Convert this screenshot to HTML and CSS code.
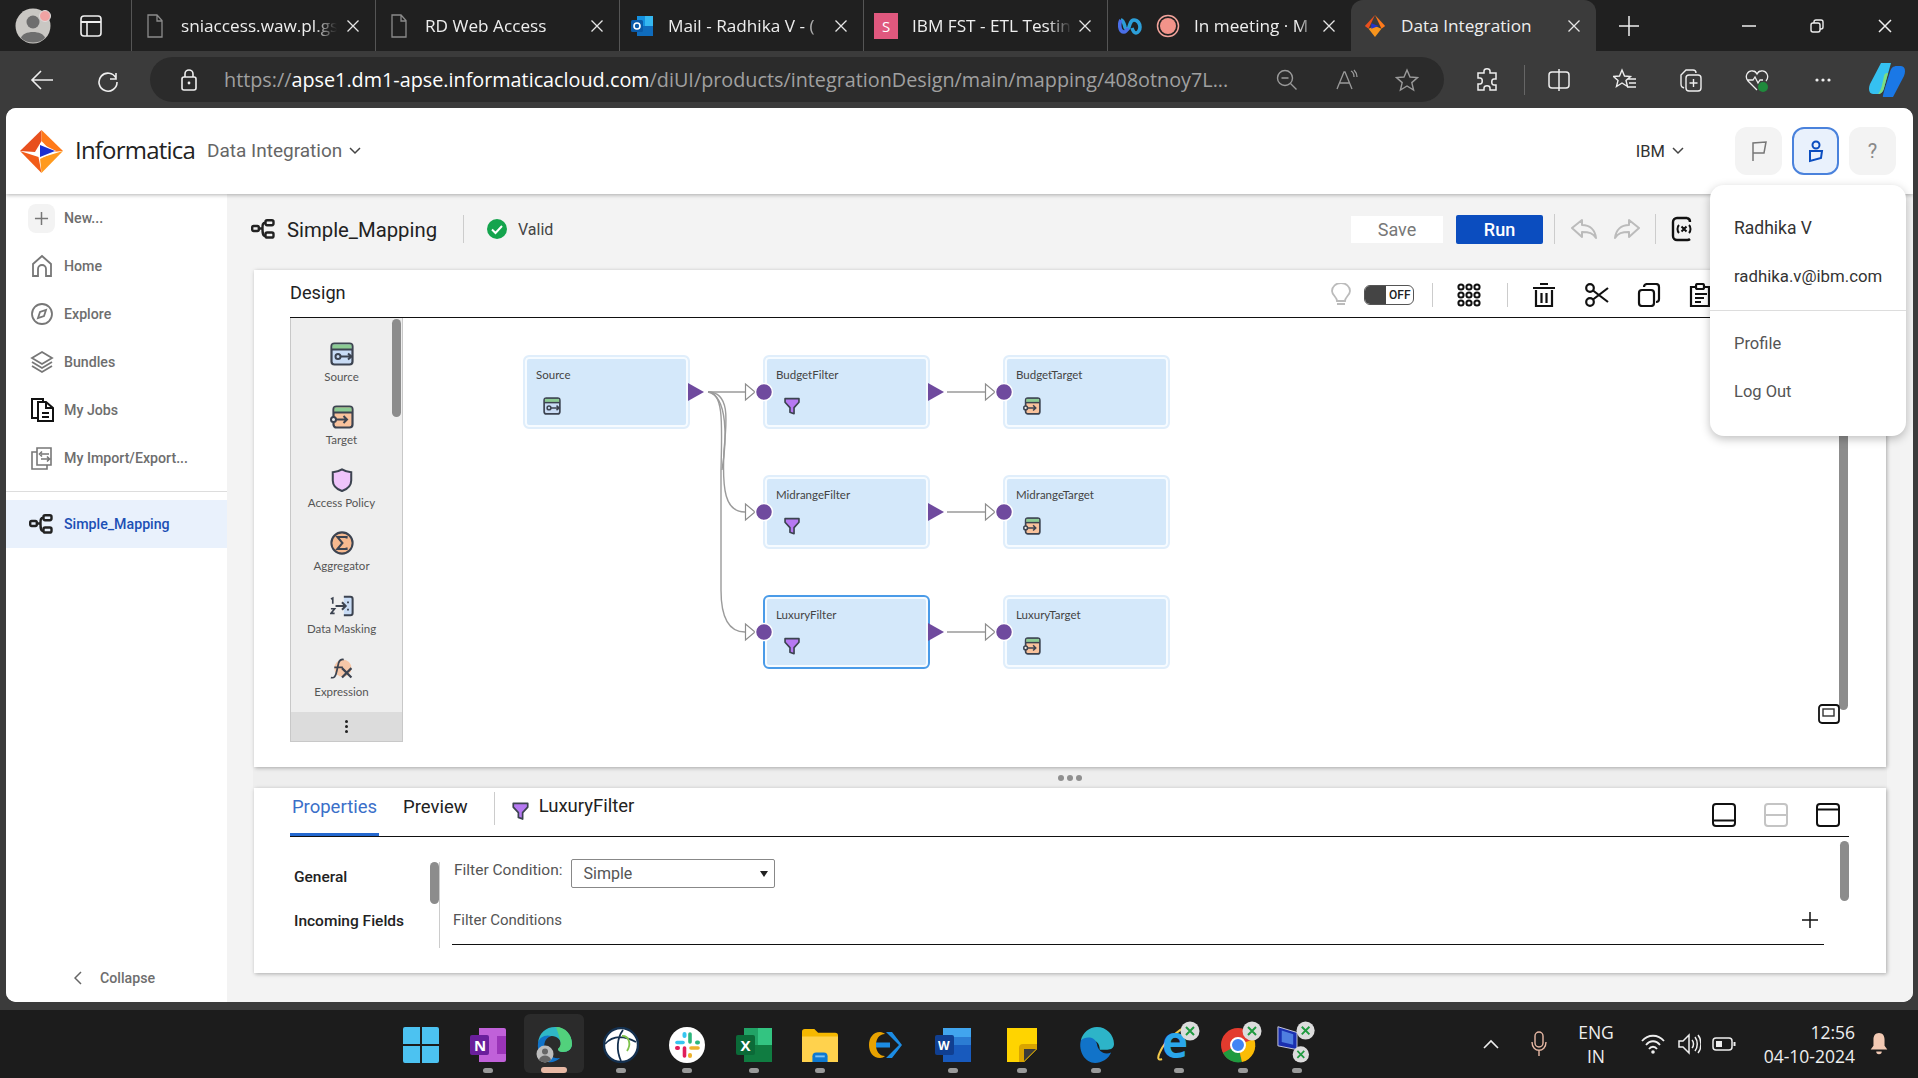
FILE: index.html
```html
<!DOCTYPE html>
<html lang="en">
<head>
<meta charset="utf-8">
<title>Data Integration</title>
<link rel="stylesheet" href="styles.css">
</head>
<body>
<svg class="sprite" xmlns="http://www.w3.org/2000/svg">
  <symbol id="mapping" viewBox="0 0 24 20"><g fill="none" stroke="currentColor" stroke-width="2.4"><rect x="1.2" y="7" width="6.6" height="5" rx="1.4"/><rect x="14.5" y="1.2" width="8" height="5" rx="1.6"/><rect x="14.5" y="13.5" width="8" height="5" rx="1.6"/><path d="M8 9.5h3M14.5 3.8c-3 0-3 2-3 5.7s0 7.5 3 7.5"/></g></symbol>
  <symbol id="page" viewBox="0 0 18 24"><path d="M2 1h9l5 5.500V23H2z M11 1v6h5" fill="none" stroke="#8b8b8b" stroke-width="1.300"/></symbol>
  <symbol id="x" viewBox="0 0 14 14"><path d="M1.500 1.500l11 11M12.500 1.500l-11 11" stroke="#e6e6e6" stroke-width="1.300" fill="none"/></symbol>
  <symbol id="src" viewBox="0 0 24 24"><rect x="1.500" y="1.500" width="21" height="21" rx="3" fill="#c9dcf5" stroke="#3c4350" stroke-width="2.200"/><path d="M2.500 2.500h19v5h-19z" fill="#8ccb93"/><path d="M1.500 7.500h21" stroke="#3c4350" stroke-width="2"/><circle cx="8" cy="14.500" r="2.500" fill="none" stroke="#3c4350" stroke-width="2"/><path d="M10.500 14.500h11M18 11.500l3.500 3-3.500 3" fill="none" stroke="#3c4350" stroke-width="2"/></symbol>
  <symbol id="tgt" viewBox="0 0 24 24"><rect x="3.500" y="1.500" width="19" height="21" rx="3" fill="#f9c29c" stroke="#3c4350" stroke-width="2.200"/><path d="M4.500 2.500h17v5h-17z" fill="#8ccb93"/><path d="M3.500 7.500h19" stroke="#3c4350" stroke-width="2"/><circle cx="3.500" cy="14.500" r="2.500" fill="#eee" stroke="#3c4350" stroke-width="2"/><path d="M6 14.500h11M13.500 11l3.500 3.500-3.500 3.500" fill="none" stroke="#3c4350" stroke-width="2"/></symbol>
  <symbol id="funnel" viewBox="0 0 20 22"><path d="M1.500 2h17v4.500L12.500 13v7.500l-5-2V13L1.500 6.500z" fill="#b679f2" stroke="#3c4350" stroke-width="2" stroke-linejoin="round"/></symbol>
  <symbol id="shield" viewBox="0 0 24 26"><path d="M12 1.500c3 2 6 2.800 10 3v9c0 5.500-4.500 9.500-10 11.500C6.500 23 2 19 2 13.500v-9c4-.2 7-1 10-3z" fill="#efc4fa" stroke="#3c4350" stroke-width="2.200"/></symbol>
  <symbol id="sigma" viewBox="0 0 26 26"><circle cx="13" cy="13" r="11.500" fill="#f6b98f" stroke="#3c4350" stroke-width="2.200"/><path d="M18 8V6.500H8l5.500 6.500L8 19.500h10V18" fill="none" stroke="#3c4350" stroke-width="2.200"/></symbol>
  <symbol id="mask" viewBox="0 0 26 24"><path d="M15 2h7a2.500 2.500 0 0 1 2.500 2.500v15A2.500 2.500 0 0 1 22 22h-7" fill="#c9dcf5" stroke="#3c4350" stroke-width="2.200"/><path d="M6 12h11M13 8l4 4-4 4" fill="none" stroke="#3c4350" stroke-width="2.200"/><path d="M19.500 7v2M19.500 15v2" stroke="#3c4350" stroke-width="2"/><path d="M1 4.500l2-1v6M1 15h4l-4 5h4" fill="none" stroke="#3c4350" stroke-width="1.800"/></symbol>
  <symbol id="fx" viewBox="0 0 28 26"><circle cx="15" cy="12" r="10" fill="#f6c7a8"/><path d="M1 23c4 1 5.500-1 7-8l2-9c1-3 3-4.500 6-4M5 11h10" fill="none" stroke="#3c4350" stroke-width="2"/><path d="M14 12l11 11M25 12L14 23" stroke="#3c4350" stroke-width="2.600"/></symbol>
  <symbol id="search" viewBox="0 0 24 24"><circle cx="10" cy="10" r="7.500" fill="none" stroke="#9a9a9a" stroke-width="1.400"/><path d="M6.500 10h7M15.500 15.500l6 6" stroke="#9a9a9a" stroke-width="1.400"/></symbol>
  <symbol id="rd" viewBox="0 0 20 20"><circle cx="10" cy="10" r="9.500" fill="#dcdcdc"/><path d="M6 6l4 4-4 4M14 6l-4 4 4 4" fill="none" stroke="#1f9a3f" stroke-width="2"/></symbol>
</svg>

<header class="tabstrip">
  <div class="profile">
    <svg class="avatar" viewBox="0 0 44 36"><circle cx="18" cy="18" r="17.500" fill="#c9c7c3"/><circle cx="18" cy="14" r="6.500" fill="#6e6e6e"/><path d="M6 30c2-8 22-8 24 0-6 6-18 6-24 0z" fill="#6e6e6e"/><circle cx="30" cy="8" r="5.500" fill="#f0a3a3" stroke="#ddd"/></svg>
    <svg class="vtabs" viewBox="0 0 22 22"><rect x="1" y="1" width="20" height="20" rx="3" fill="none" stroke="#eee" stroke-width="1.600"/><path d="M1 7h20" stroke="#eee" stroke-width="2"/><path d="M7 7v14" stroke="#eee" stroke-width="1.600"/></svg>
  </div>
  <div class="tab"><svg class="tab-ic"><use href="#page"/></svg><span class="tab-t">sniaccess.waw.pl.gs</span><svg class="tab-x"><use href="#x"/></svg></div>
  <div class="tab"><svg class="tab-ic"><use href="#page"/></svg><span class="tab-t">RD Web Access</span><svg class="tab-x"><use href="#x"/></svg></div>
  <div class="tab tab-c"><svg class="tab-ic tab-ic-w" viewBox="0 0 24 24"><path d="M7 2h16v20H7z" fill="#1490df"/><path d="M7 12h16v10H7z" fill="#0f6cbd"/><path d="M15 2h8v10h-8z" fill="#35b8f1"/><rect x="1" y="6" width="12" height="12" rx="1.500" fill="#0a5aa8"/><circle cx="7" cy="12" r="3" fill="none" stroke="#fff" stroke-width="1.600"/></svg><span class="tab-t">Mail - Radhika V - (</span><svg class="tab-x"><use href="#x"/></svg></div>
  <div class="tab tab-c"><span class="tab-s">S</span><span class="tab-t">IBM FST - ETL Testin</span><svg class="tab-x"><use href="#x"/></svg></div>
  <div class="tab tab-c"><svg class="tab-ic tab-ic-w" viewBox="0 0 24 24"><path d="M3 6c2 0 3 3 4 7 1 3 3 3 4 0l1-3c1-3 2-4 4-4 4 0 6 4 6 7s-2 6-4 6-3-2-4-5" fill="none" stroke="#2c9fd9" stroke-width="3.600"/><path d="M3 6C1 9 1 18 6 18c2 0 3-2 4-4" fill="none" stroke="#4a6fe8" stroke-width="3.600"/></svg><svg class="tab-ic tab-ic-w" viewBox="0 0 24 24"><circle cx="12" cy="12" r="10.500" fill="none" stroke="#f2a39b" stroke-width="1.500"/><circle cx="12" cy="12" r="8" fill="#f2938a"/></svg><span class="tab-t">In meeting · M</span><svg class="tab-x"><use href="#x"/></svg></div>
  <div class="tab tab-c tab-on"><svg class="tab-ic tab-ic-w" viewBox="0 0 24 26"><path d="M12 1L1 13l4 3z" fill="#e8501e"/><path d="M12 1l11 12-4 3z" fill="#ff7a1a"/><path d="M5 16l7 9 7-9-7-3z" fill="#f7941d"/><path d="M8 10l8 3-8 3z" fill="#2233cc"/></svg><span class="tab-t">Data Integration</span><svg class="tab-x"><use href="#x"/></svg></div>
  <svg class="newtab" viewBox="0 0 22 22"><path d="M11 1v20M1 11h20" stroke="#eee" stroke-width="1.500"/></svg>
  <div class="winbtns">
    <svg viewBox="0 0 16 16"><path d="M1 8h14" stroke="#eee" stroke-width="1.500"/></svg>
    <svg viewBox="0 0 16 16"><rect x="2" y="5" width="9" height="9" rx="2" fill="none" stroke="#eee" stroke-width="1.400"/><path d="M5 5V4a2 2 0 0 1 2-2h5a2 2 0 0 1 2 2v5a2 2 0 0 1-2 2h-1" fill="none" stroke="#eee" stroke-width="1.400"/></svg>
    <svg viewBox="0 0 16 16"><path d="M2 2l12 12M14 2L2 14" stroke="#eee" stroke-width="1.500"/></svg>
  </div>
</header>

<nav class="addrbar">
  <svg class="bi" viewBox="0 0 24 24"><path d="M23 12H2M11 3l-9 9 9 9" fill="none" stroke="#eee" stroke-width="1.600"/></svg>
  <svg class="bi" viewBox="0 0 24 24"><path d="M20 5v6h-6M20 10a9 9 0 1 0 1 4" fill="none" stroke="#eee" stroke-width="1.600"/></svg>
  <div class="field">
    <svg class="bi" viewBox="0 0 24 24"><rect x="5" y="9" width="14" height="13" rx="2" fill="none" stroke="#eee" stroke-width="1.600"/><path d="M8 9V6a4 4 0 0 1 8 0v3" fill="none" stroke="#eee" stroke-width="1.600"/><circle cx="12" cy="15" r="1.400" fill="#eee"/></svg>
    <div class="url">https://<b>apse1.dm1-apse.informaticacloud.com</b>/diUI/products/integrationDesign/main/mapping/408otnoy7L...</div>
    <div class="field-ics">
      <svg class="bi"><use href="#search"/></svg>
      <svg class="bi" viewBox="0 0 24 24"><path d="M2 21L9 4h1l7 17M5 15h10M16 3c2 1 3 3 3 6M19 2c2 2 3 4 3 7" fill="none" stroke="#9a9a9a" stroke-width="1.300"/></svg>
      <svg class="bi" viewBox="0 0 24 24"><path d="M12 2l3 7 7.500.6-5.700 5 1.800 7.400L12 18l-6.600 4 1.800-7.400-5.700-5L9 9z" fill="none" stroke="#9a9a9a" stroke-width="1.400"/></svg>
    </div>
  </div>
  <div class="ext">
    <svg class="bi" viewBox="0 0 24 24"><path d="M9 3c0-3 6-3 6 0v2h6v6h-2c-3 0-3 6 0 6h2v5h-6v-2c0-3-6-3-6 0v2H3v-6h2c3 0 3-6 0-6H3V5h6z" fill="none" stroke="#eee" stroke-width="1.500"/></svg>
    <i class="ext-div"></i>
    <svg class="bi" viewBox="0 0 24 24"><rect x="2" y="4" width="20" height="16" rx="3" fill="none" stroke="#eee" stroke-width="1.500"/><path d="M12 1v22" stroke="#eee" stroke-width="1.500"/></svg>
    <svg class="bi" viewBox="0 0 24 24"><path d="M9 2l2.500 6 6 .5-4.500 4 1.500 6L9 15l-5.500 3.500 1.500-6-4.500-4 6-.5zM15 11h8M16 15h7M14 19h9" fill="none" stroke="#eee" stroke-width="1.400"/></svg>
    <svg class="bi" viewBox="0 0 24 24"><rect x="7" y="7" width="15" height="16" rx="3" fill="none" stroke="#eee" stroke-width="1.400"/><path d="M5 20l-2-1c-1-1-1-2-1-3V7l5-5h7c2 0 3 1 3 3M14.500 11v8M10.500 15h8" fill="none" stroke="#eee" stroke-width="1.400"/></svg>
    <svg class="bi" viewBox="0 0 24 24"><path d="M12 22L3 13C-1 8 3 2 8 3c2 0 3 1 4 3 1-2 2-3 4-3 5-1 9 5 5 10M2 12h6l2-3 3 6 2-3h3" fill="none" stroke="#eee" stroke-width="1.300"/><circle cx="18" cy="19" r="5" fill="#1f8a3c"/></svg>
    <svg class="bi" viewBox="0 0 24 24"><circle cx="6" cy="12" r="1.600" fill="#eee"/><circle cx="12" cy="12" r="1.600" fill="#eee"/><circle cx="18" cy="12" r="1.600" fill="#eee"/></svg>
    <svg class="copilot" viewBox="0 0 36 36"><path d="M12 1h10l-7 25c-1 4-3 6-7 6H4C0 32-1 27 1 22z" fill="#35c1f1"/><path d="M15 14c0-2 2-3 3-3h1L15 26c-1 4-3 6-6 6 3-3 4-8 6-18z" fill="#7de07f"/><path d="M24 35H14c-1 0 7-25 7-25 1-4 3-6 7-6h4c4 0 5 5 3 10z" fill="#1a78e6"/></svg>
  </div>
</nav>

<main class="app">
  <div class="apphead">
    <svg class="logo" viewBox="0 0 43 43"><path d="M21.500 0L0 21l15 1 6.500-11z" fill="#e8501e"/><path d="M21.500 0L43 21l-11 1-10.500-11z" fill="#ff7a1a"/><path d="M0 21l21.500 22-3-16z" fill="#f25c19"/><path d="M21.500 43L43 21l-23 7z" fill="#ff9a1e"/><path d="M20 13l16 8-16 8z" fill="#fff"/><path d="M20 15l15 6-15 6z" fill="#1c2fd0"/></svg>
    <span class="brand">Informatica</span>
    <span class="product">Data Integration</span>
    <svg class="chev" viewBox="0 0 12 8"><path d="M1 1l5 5 5-5" fill="none" stroke="#444" stroke-width="1.500"/></svg>
    <span class="org">IBM</span>
    <svg class="chev" viewBox="0 0 12 8"><path d="M1 1l5 5 5-5" fill="none" stroke="#444" stroke-width="1.500"/></svg>
    <div class="hbtns">
      <span class="hbtn"><svg viewBox="0 0 24 24"><path d="M6 22V4l13-1-2 11H6" fill="none" stroke="#777" stroke-width="1.500"/></svg></span>
      <span class="hbtn hbtn-on"><svg viewBox="0 0 24 24"><circle cx="12" cy="6" r="3.500" fill="none" stroke="#0b4dbf" stroke-width="2"/><path d="M6 12h12l-1 7-11 3z" fill="none" stroke="#0b4dbf" stroke-width="2"/></svg></span>
      <span class="hbtn hbtn-q">?</span>
    </div>
  </div>

  <div class="appbody">
    <aside class="side">
      <div class="row"><span class="plus"><svg viewBox="0 0 16 16"><path d="M8 1v14M1 8h14" stroke="#777" stroke-width="1.600"/></svg></span><span>New...</span></div>
      <div class="row"><svg class="ri" viewBox="0 0 24 24"><path d="M3 22V10l9-8 9 8v12h-5v-7a4 4 0 0 0-8 0v7z" fill="none" stroke="#777" stroke-width="1.800"/></svg><span>Home</span></div>
      <div class="row"><svg class="ri" viewBox="0 0 24 24"><circle cx="12" cy="12" r="10" fill="none" stroke="#777" stroke-width="1.800"/><path d="M16 8l-2 6-6 2 2-6z" fill="none" stroke="#777" stroke-width="1.800"/></svg><span>Explore</span></div>
      <div class="row"><svg class="ri" viewBox="0 0 24 24"><path d="M12 2l10 6-10 6L2 8z" fill="#fff" stroke="#777" stroke-width="1.800"/><path d="M2 12l10 6 10-6M2 16l10 6 10-6" fill="none" stroke="#777" stroke-width="1.800"/></svg><span>Bundles</span></div>
      <div class="row"><svg class="ri" viewBox="0 0 24 24"><path d="M8 4h8l7 6v13H8z M16 4v6h7M12 15h7M12 19h7" fill="#fff" stroke="#111" stroke-width="2"/><path d="M8 20H2V1h11v3" fill="none" stroke="#111" stroke-width="2"/></svg><span>My Jobs</span></div>
      <div class="row"><svg class="ri" viewBox="0 0 24 24"><path d="M7 2h14v17H7z M11 8h8M11 13h8M12 5.500L9.500 8l2.500 2.500M17 10.500l2.500 2.500-2.500 2.500" fill="#fff" stroke="#777" stroke-width="1.600"/><path d="M7 6H2v17h15v-4" fill="none" stroke="#777" stroke-width="1.600"/></svg><span>My Import/Export...</span></div>
      <hr class="sep">
      <div class="row row-on"><svg class="ri ri-m"><use href="#mapping"/></svg><span>Simple_Mapping</span></div>
      <div class="row collapse"><svg class="back" viewBox="0 0 8 14"><path d="M7 1L1 7l6 6" fill="none" stroke="#666" stroke-width="1.500"/></svg><span>Collapse</span></div>
    </aside>

    <section class="main">
      <div class="toolbar">
        <svg class="map-ic"><use href="#mapping"/></svg>
        <span class="title">Simple_Mapping</span>
        <i class="vr vr-t"></i>
        <svg class="ok" viewBox="0 0 20 20"><circle cx="10" cy="10" r="10" fill="#14a44d"/><path d="M5 10.500l3.500 3.500L15 7" fill="none" stroke="#fff" stroke-width="2"/></svg>
        <span class="valid">Valid</span>
        <button class="save">Save</button>
        <button class="run">Run</button>
        <i class="vr vr-a"></i>
        <svg class="ur" viewBox="0 0 26 22"><path d="M1 10L11 2v5c8 0 13 5 14 13-3-5-7-6-14-6v5z" fill="none" stroke="#bbb" stroke-width="2" stroke-linejoin="round"/></svg>
        <svg class="ur ur-r" viewBox="0 0 26 22"><path d="M25 10L15 2v5C7 7 2 12 1 20c3-5 7-6 14-6v5z" fill="none" stroke="#bbb" stroke-width="2" stroke-linejoin="round"/></svg>
        <i class="vr vr-b"></i>
        <svg class="xv" viewBox="0 0 24 26"><path d="M16 2H6a4 4 0 0 0-4 4v14a4 4 0 0 0 4 4h10a4 4 0 0 0 3-1M19 6a4 4 0 0 0-3-4" fill="none" stroke="#111" stroke-width="2.400"/><path d="M8 9c-2 2-2 6 0 8M18 9c2 2 2 6 0 8M10.500 10.500l5 5M15.500 10.500l-5 5" fill="none" stroke="#111" stroke-width="2"/></svg>
      </div>

      <div class="panel design">
        <div class="dhead">
          <span class="dtitle">Design</span>
          <div class="dtools">
            <svg class="bulb" viewBox="0 0 20 24"><path d="M6 18c0-4-5-6-5-10a9 8 0 0 1 18 0c0 4-5 6-5 10zM6 21h8" fill="none" stroke="#bbb" stroke-width="1.800"/></svg>
            <span class="toggle"><i class="toggle-k"></i><span>OFF</span></span>
            <i class="vr vr-d"></i>
            <svg class="ti" viewBox="0 0 24 24"><g fill="none" stroke="#111" stroke-width="2"><circle cx="4" cy="4" r="2.600"/><circle cx="12" cy="4" r="2.600"/><circle cx="20" cy="4" r="2.600"/><circle cx="4" cy="12" r="2.600"/><circle cx="12" cy="12" r="2.600"/><circle cx="20" cy="12" r="2.600"/><circle cx="4" cy="20" r="2.600"/><circle cx="12" cy="20" r="2.600"/><circle cx="20" cy="20" r="2.600"/></g></svg>
            <i class="vr vr-d"></i>
            <svg class="ti ti-trash" viewBox="0 0 24 24"><path d="M4 7v16h16V7M1 5h22M8 1h8M9.500 10v10M14.500 10v10" fill="none" stroke="#111" stroke-width="2.200"/></svg>
            <svg class="ti" viewBox="0 0 24 24"><circle cx="5" cy="5" r="3.800" fill="none" stroke="#111" stroke-width="2.200"/><circle cx="5" cy="19" r="3.800" fill="none" stroke="#111" stroke-width="2.200"/><path d="M8 7.500L23 19M8 16.500L23 5" stroke="#111" stroke-width="2.200"/></svg>
            <svg class="ti" viewBox="0 0 24 24"><rect x="2" y="7" width="15" height="16" rx="3" fill="none" stroke="#111" stroke-width="2.200"/><path d="M7 4a3 3 0 0 1 3-3h9a3 3 0 0 1 3 3v12a3 3 0 0 1-3 3" fill="none" stroke="#111" stroke-width="2.200"/></svg>
            <svg class="ti" viewBox="0 0 24 24"><path d="M7 4H2v19h18V4h-5M6 11h12M6 15h9M6 19h6" fill="none" stroke="#111" stroke-width="2.200"/><rect x="7" y="1" width="8" height="5" rx="1.500" fill="none" stroke="#111" stroke-width="2.200"/></svg>
          </div>
        </div>
        <div class="dbody">
          <div class="palette">
            <div class="pal-list">
              <div class="pal"><svg><use href="#src"/></svg><span>Source</span></div>
              <div class="pal"><svg><use href="#tgt"/></svg><span>Target</span></div>
              <div class="pal"><svg><use href="#shield"/></svg><span>Access Policy</span></div>
              <div class="pal"><svg><use href="#sigma"/></svg><span>Aggregator</span></div>
              <div class="pal"><svg><use href="#mask"/></svg><span>Data Masking</span></div>
              <div class="pal"><svg><use href="#fx"/></svg><span>Expression</span></div>
            </div>
            <div class="pal-more"><i></i><i></i><i></i></div>
            <i class="pal-thumb"></i>
          </div>
          <div class="canvas">
            <div class="node c1 r1"><span>Source</span><svg><use href="#src"/></svg></div>
            <div class="node c2 r1"><span>BudgetFilter</span><svg><use href="#funnel"/></svg></div>
            <div class="node c3 r1"><span>BudgetTarget</span><svg><use href="#tgt"/></svg></div>
            <div class="node c2 r2"><span>MidrangeFilter</span><svg><use href="#funnel"/></svg></div>
            <div class="node c3 r2"><span>MidrangeTarget</span><svg><use href="#tgt"/></svg></div>
            <div class="node node-sel c2 r3"><span>LuxuryFilter</span><svg><use href="#funnel"/></svg></div>
            <div class="node c3 r3"><span>LuxuryTarget</span><svg><use href="#tgt"/></svg></div>
            <svg class="wires" viewBox="403 318 1446 424">
              <g fill="none" stroke="#9b9b9b" stroke-width="1.400">
                <path d="M708 392H745M947 392H985M947 512H985M947 632H985"/>
                <path d="M708 392C730 392 727 420 724 450C722 490 725 512 745 512"/>
                <path d="M708 392C724 392 722 425 721 470V590C721 620 730 632 745 632"/>
                <path d="M708 392C728 396 727 440 722 470"/>
              </g>
              <g fill="#fff" stroke="#8d8d8d" stroke-width="1.200">
                <path d="M745.500 384V400L755 392z"/><path d="M745.500 504V520L755 512z"/><path d="M745.500 624V640L755 632z"/>
                <path d="M985.500 384V400L995 392z"/><path d="M985.500 504V520L995 512z"/><path d="M985.500 624V640L995 632z"/>
              </g>
              <g fill="#6f4a9e">
                <path d="M688 383V401L704 392z"/><path d="M928 383V401L944 392z"/><path d="M928 503V521L944 512z"/><path d="M928 623V641L944 632z"/>
              </g>
              <g fill="#6f4a9e" stroke="#fff" stroke-width="1.500">
                <circle cx="764" cy="392" r="8.500"/><circle cx="764" cy="512" r="8.500"/><circle cx="764" cy="632" r="8.500"/>
                <circle cx="1004" cy="392" r="8.500"/><circle cx="1004" cy="512" r="8.500"/><circle cx="1004" cy="632" r="8.500"/>
              </g>
            </svg>
            <i class="canvas-thumb"></i>
            <svg class="mini" viewBox="0 0 22 20"><rect x="1" y="1" width="20" height="18" rx="3" fill="none" stroke="#111" stroke-width="1.800"/><rect x="5" y="5" width="11" height="7" fill="none" stroke="#333" stroke-width="1.400"/></svg>
          </div>
        </div>
      </div>

      <div class="grip"><i></i><i></i><i></i></div>

      <div class="panel props">
        <div class="ptabs">
          <span class="ptab ptab-on">Properties</span>
          <span class="ptab">Preview</span>
          <i class="vr vr-p"></i>
          <svg class="pf"><use href="#funnel"/></svg>
          <span class="pname">LuxuryFilter</span>
          <div class="pview">
            <svg viewBox="0 0 24 24"><rect x="1" y="1" width="22" height="22" rx="3" fill="none" stroke="#111" stroke-width="2"/><path d="M1 17.500h22" stroke="#111" stroke-width="2"/></svg>
            <svg viewBox="0 0 24 24"><rect x="1" y="1" width="22" height="22" rx="3" fill="none" stroke="#c4c4c4" stroke-width="2"/><path d="M1 12h22" stroke="#c4c4c4" stroke-width="2"/></svg>
            <svg viewBox="0 0 24 24"><rect x="1" y="1" width="22" height="22" rx="3" fill="none" stroke="#111" stroke-width="2"/><path d="M1 6.500h22" stroke="#111" stroke-width="2"/></svg>
          </div>
        </div>
        <div class="pbody">
          <div class="pnav"><div>General</div><div>Incoming Fields</div></div>
          <div class="pdiv"><i></i></div>
          <div class="pmain">
            <div class="cond"><span>Filter Condition:</span><div class="select"><span>Simple</span><i></i></div></div>
            <div class="fc"><span>Filter Conditions</span><svg viewBox="0 0 18 18"><path d="M9 1v16M1 9h16" stroke="#111" stroke-width="1.500"/></svg></div>
          </div>
        </div>
        <i class="props-thumb"></i>
      </div>
    </section>
  </div>

  <div class="menu">
    <div class="mi mi-d">Radhika V</div>
    <div class="mi mi-d mi-e">radhika.v@ibm.com</div>
    <hr class="msep">
    <div class="mi">Profile</div>
    <div class="mi">Log Out</div>
  </div>
</main>

<footer class="taskbar">
  <div class="tb tb-nodot"><svg viewBox="0 0 36 36"><path d="M0 2a2 2 0 0 1 2-2h15v17H0zM19 0h15a2 2 0 0 1 2 2v15H19zM0 19h17v17H2a2 2 0 0 1-2-2zM19 19h17v15a2 2 0 0 1-2 2H19z" fill="#4cc2f1"/></svg></div>
  <div class="tb"><svg viewBox="0 0 36 36"><path d="M9 1h25a2 2 0 0 1 2 2v30a2 2 0 0 1-2 2H9z" fill="#c061d9"/><path d="M27 9h9v18h-9z" fill="#9a34b8"/><rect x="0" y="8" width="19" height="20" rx="2" fill="#6a1f9c"/><text x="4" y="24" class="tb-t">N</text></svg></div>
  <div class="tb tb-sel"><svg viewBox="0 0 36 36"><path d="M2 16C3 6 10 0 19 0c10 0 17 8 17 17 0 5-4 8-9 8-3 0-5-1-5-3 2-1 3-3 3-5 0-4-4-8-9-8-7 0-13 4-14 7z" fill="#2fb7c6"/><path d="M20 0c10 0 16 8 16 17 0 5-4 8-9 8-3 0-5-1-5-3 3-3 3-6 2-9-1-5-3-10-4-13z" fill="#52d17c"/><path d="M2 16c1-6 8-9 13-7-6 2-8 8-6 14 2 5 8 9 15 8-3 3-8 5-12 4C5 33 1 24 2 16z" fill="#1173c9"/><circle cx="9" cy="27" r="8.500" fill="#bdbdbd"/><circle cx="9" cy="24.500" r="3" fill="#666"/><path d="M3 33c1-6 11-6 12 0-3 3-9 3-12 0z" fill="#666"/></svg></div>
  <div class="tb"><svg viewBox="0 0 36 36"><circle cx="18" cy="18" r="17" fill="#fff" stroke="#14304f" stroke-width="2.400"/><path d="M2 17c7-8 18-9 31-2M20 3c-6 8-7 20-2 31" fill="none" stroke="#14304f" stroke-width="1.800"/><path d="M19 9c8 0 9 9 5 15" fill="none" stroke="#7dc24b" stroke-width="1.800"/></svg></div>
  <div class="tb"><svg viewBox="0 0 36 36"><circle cx="18" cy="18" r="18" fill="#fff"/><path d="M8 15.500h6" stroke="#36c5f0" stroke-width="3.600" stroke-linecap="round"/><path d="M15.500 7v2" stroke="#36c5f0" stroke-width="4" stroke-linecap="round"/><path d="M21 7v8" stroke="#2eb67d" stroke-width="3.600" stroke-linecap="round"/><path d="M28 15.500h1" stroke="#2eb67d" stroke-width="4" stroke-linecap="round"/><path d="M22 21h7" stroke="#ecb22e" stroke-width="3.600" stroke-linecap="round"/><path d="M21 28v1" stroke="#ecb22e" stroke-width="4" stroke-linecap="round"/><path d="M15.500 21v8" stroke="#e01e5a" stroke-width="3.600" stroke-linecap="round"/><path d="M8 21h1" stroke="#e01e5a" stroke-width="4" stroke-linecap="round"/></svg></div>
  <div class="tb"><svg viewBox="0 0 36 36"><path d="M8 1h26a2 2 0 0 1 2 2v30a2 2 0 0 1-2 2H8z" fill="#21a366"/><path d="M22 1h14v17H22z" fill="#33c481"/><path d="M8 18h28v17H8z" fill="#107c41"/><rect x="0" y="8" width="19" height="20" rx="2" fill="#0b6a38"/><text x="4.500" y="24" class="tb-t">X</text></svg></div>
  <div class="tb"><svg viewBox="0 0 38 36"><path d="M0 4a3 3 0 0 1 3-3h10l4 4h18a3 3 0 0 1 3 3v26H0z" fill="#f5b800"/><path d="M0 9h38v27H0z" fill="#ffd24d"/><path d="M11 30a4 4 0 0 1 4-4h8a4 4 0 0 1 4 4v6H11z" fill="#0e7ad1"/><path d="M14 30h10" stroke="#7cc3f5" stroke-width="2"/></svg></div>
  <div class="tb tb-nodot tb-arrow"><svg viewBox="0 0 36 36"><path d="M14 5C7 5 3 11 3 18s4 13 11 13c2 0 4-1 5-2-6 0-9-5-9-11s3-11 9-11c-1-1-3-2-5-2z" fill="#e8a200"/><path d="M10 18h14" stroke="#1c8ce3" stroke-width="5"/><path d="M20 5l13 13-13 13h6l10-13L26 5z" fill="#1c8ce3"/></svg></div>
  <div class="tb tb-word"><svg viewBox="0 0 36 36"><path d="M8 1h26a2 2 0 0 1 2 2v30a2 2 0 0 1-2 2H8z" fill="#2b7cd3"/><path d="M8 18h28v17H8z" fill="#185abd"/><path d="M8 1h28v9H8z" fill="#41a5ee"/><rect x="0" y="8" width="19" height="20" rx="2" fill="#103f91"/><text x="3" y="23" class="tb-t tb-t-w">W</text></svg></div>
  <div class="tb tb-sticky"><svg viewBox="0 0 36 36"><path d="M3 1h30v21L20 35H3z" fill="#ffd400"/><path d="M33 17v5L20 35h-5V21a4 4 0 0 1 4-4z" fill="#d9a400"/><path d="M20 22v12l12-12z" fill="#3a3a3a"/></svg></div>
  <div class="tb tb-edge"><svg viewBox="0 0 38 38"><path d="M3 14C5 6 12 0 20 0c10 0 18 8 18 18 0 4-3 6-7 6h-8c0-7-4-10-9-10-4 0-8 1-11 0z" fill="#2db4c8"/><path d="M3 14c4-4 15-5 17 4 1 7 7 12 15 9-3 7-10 11-17 11C8 38 0 26 3 14z" fill="#1173c9"/></svg></div>
  <div class="tb tb-ie tb-wide"><svg viewBox="0 0 44 42"><path d="M5 38C1 40 0 37 3 31 8 19 22 9 30 5" fill="none" stroke="#f2c94c" stroke-width="2"/><text x="5" y="37" class="tb-e">e</text><use href="#rd" x="23" y="0" width="20" height="20"/></svg></div>
  <div class="tb tb-chrome tb-wide"><svg viewBox="0 0 44 42"><circle cx="17" cy="24" r="17" fill="#e33b2e"/><path d="M17 24L2 32a17 17 0 0 0 19 9z" fill="#1f9a3f"/><path d="M17 24l16-6a17 17 0 0 1-12 23z" fill="#fbbc05"/><circle cx="17" cy="24" r="7" fill="#4285f4" stroke="#fff" stroke-width="2"/><use href="#rd" x="21" y="0" width="20" height="20"/></svg></div>
  <div class="tb tb-rdp tb-wide"><svg viewBox="0 0 44 44"><path d="M2 6l20 6v18L2 26z" fill="#1a2fb0" stroke="#ccd" stroke-width="1"/><path d="M6 10l12 4v11L6 22z" fill="#4f7ee0"/><use href="#rd" x="21" y="0" width="20" height="20"/><use href="#rd" x="17" y="26" width="18" height="18"/></svg></div>
  <div class="tray">
    <svg class="tr" viewBox="0 0 16 10"><path d="M1 9l7-7 7 7" fill="none" stroke="#eee" stroke-width="1.600"/></svg>
    <svg class="tr-mic" viewBox="0 0 16 26"><rect x="4" y="1" width="8" height="15" rx="4" fill="none" stroke="#e8b9a5" stroke-width="1.400"/><path d="M1 11c0 11 14 11 14 0M8 20v5" fill="none" stroke="#e8b9a5" stroke-width="1.400"/></svg>
    <div class="lang"><span>ENG</span><span>IN</span></div>
    <svg class="tr-w" viewBox="0 0 24 24"><path d="M1 9c6-7 16-7 22 0M5 13c4-5 10-5 14 0M8 17c2-3 6-3 8 0" fill="none" stroke="#eee" stroke-width="1.800"/><circle cx="12" cy="20" r="1.800" fill="#eee"/></svg>
    <svg class="tr-w" viewBox="0 0 24 24"><path d="M2 9h4l6-6v18l-6-6H2zM15 8c2 2 2 6 0 8M18 5c3 4 3 10 0 14M21 3c4 5 4 13 0 18" fill="none" stroke="#eee" stroke-width="1.500"/></svg>
    <svg class="tr-w" viewBox="0 0 24 24"><rect x="1" y="6" width="19" height="12" rx="3" fill="none" stroke="#eee" stroke-width="1.500"/><rect x="4" y="9" width="6" height="6" fill="#eee"/><path d="M22.500 10v4" stroke="#eee" stroke-width="2"/></svg>
    <div class="clock"><span>12:56</span><span>04-10-2024</span></div>
    <svg class="tr-w" viewBox="0 0 20 26"><path d="M10 1c-4 0-6 3-6 7v7l-3 4h18l-3-4V8c0-4-2-7-6-7zM7 21a3 3 0 0 0 6 0z" fill="#f2c9b3"/></svg>
  </div>
</footer>
</body>
</html>
```

FILE: styles.css
```css
* { box-sizing: border-box; }
html, body { margin: 0; height: 100%; }
body {
  width: 1918px; height: 1078px; overflow: hidden; background: #3b3b3b;
  display: flex; flex-direction: column; font-family: Roboto, sans-serif; color: #222;
}
i { display: block; }
.sprite { display: none; }
button { font-family: inherit; border: 0; }

/* browser tabs */
.tabstrip { height: 51px; background: #202020; display: flex; flex: none; }
.profile { width: 131px; display: flex; align-items: center; padding-left: 15px; gap: 21px; flex: none; }
.avatar { width: 44px; height: 36px; }
.vtabs { width: 22px; height: 22px; }
.tab {
  width: 244px; flex: none; display: flex; align-items: center; gap: 17px; padding: 0 15px 0 14px;
  border-left: 1px solid #555; color: #eee; font: 17.200px "Open Sans", "Noto Sans", sans-serif;
}
.tab-c { padding-left: 10px; gap: 14px; }
.tab-ic { width: 18px; height: 24px; flex: none; }
.tab-ic-w { width: 24px; }
.tab-t {
  flex: 1; min-width: 0; white-space: nowrap;
  mask-image: linear-gradient(90deg, #000 85%, transparent);
}
.tab-x { width: 14px; height: 14px; flex: none; margin-left: -8px; }
.tab-s { width: 24px; height: 26px; background: #e0587e; color: #fff; font-size: 15px; text-align: center; line-height: 26px; flex: none; }
.tab-on { background: #3b3b3b; border-radius: 12px 12px 0 0; border-left: 0; width: 245px; padding-left: 12px; }
.tab-on .tab-t { mask-image: none; }
.newtab { width: 22px; height: 22px; margin: 15px 0 0 22px; flex: none; }
.winbtns { margin-left: auto; display: flex; align-items: center; gap: 52px; padding-right: 25px; }
.winbtns svg { width: 16px; height: 16px; }

/* address bar */
.addrbar { height: 57px; display: flex; align-items: flex-start; padding: 6px 0 0 30px; flex: none; gap: 42px; }
.bi { width: 24px; height: 24px; flex: none; }
.addrbar > .bi { margin-top: 11px; }
.field {
  width: 1294px; height: 45px; margin-left: -12px; background: #2b2b2b; border-radius: 23px;
  display: flex; align-items: center; gap: 23px; padding: 0 25px 0 27px; flex: none;
}
.url { flex: 1; min-width: 0; white-space: nowrap; color: #a0a0a0; font: 19.800px "Open Sans", "Noto Sans", sans-serif; }
.url b { color: #fff; font-weight: 400; }
.field-ics { display: flex; gap: 36px; }
.ext { display: flex; align-items: center; height: 45px; gap: 42px; margin-left: -11px; }
.ext-div { width: 1px; height: 30px; background: #666; margin: 0 -20px 0 -17px; }
.copilot { width: 36px; height: 36px; margin-left: -8px; }

/* app window */
.app {
  width: 1907px; height: 894px; margin-left: 6px; background: #fff; border-radius: 10px;
  display: flex; flex-direction: column; position: relative; overflow: hidden; flex: none;
}
.apphead {
  height: 86px; display: flex; align-items: center; flex: none; padding: 0 17px 0 14px;
  box-shadow: 0 1px 4px rgba(0,0,0,.3); position: relative; z-index: 1; background: #fff;
}
.logo { width: 43px; height: 43px; }
.brand { font: 400 24px "Open Sans", sans-serif; color: #222; margin: -3px 0 0 12px; letter-spacing: -0.800px; }
.product { font: 19px Roboto, sans-serif; color: #666; margin: -2px 0 0 12px; }
.chev { width: 12px; height: 8px; margin-left: 7px; }
.org { font: 16.500px Roboto, sans-serif; color: #333; margin-left: auto; }
.hbtns { display: flex; gap: 10px; margin-left: 51px; }
.hbtn { width: 47px; height: 48px; border-radius: 12px; background: #f3f3f3; display: flex; align-items: center; justify-content: center; }
.hbtn svg { width: 24px; height: 24px; }
.hbtn-on { background: #e9f1fc; border: 2px solid #4a82dc; }
.hbtn-q { color: #888; font-size: 20px; }

.appbody { flex: 1; display: flex; min-height: 0; }

/* sidebar */
.side { width: 221px; background: #fff; display: flex; flex-direction: column; flex: none; font: 500 14.200px Roboto, sans-serif; color: #6e6e6e; }
.row { height: 48px; display: flex; align-items: center; padding-left: 22px; gap: 9px; flex: none; }
.plus { width: 27px; height: 29px; background: #f3f3f3; border-radius: 8px; display: flex; align-items: center; justify-content: center; }
.plus svg { width: 15px; height: 15px; }
.ri { width: 24px; height: 24px; margin: 0 1px 0 2px; flex: none; }
.ri-m { margin: 0 2px 0 1px; color: #222; }
.sep { width: 100%; height: 1px; border: 0; background: #ddd; margin: 9px 0 8px; }
.row-on { background: #e9f1fc; color: #1c4fb5; }
.collapse { margin-top: auto; padding-left: 68px; gap: 18px; }
.back { width: 8px; height: 14px; }

/* main */
.main { flex: 1; min-width: 0; background: #f3f3f3; padding: 0 27px; display: flex; flex-direction: column; }
.toolbar { height: 76px; display: flex; align-items: center; padding: 0 191px 6px 0; margin-left: -3px; flex: none; }
.map-ic { width: 24px; height: 20px; color: #222; }
.title { font-size: 20.300px; margin: 2px 0 0 12px; color: #222; }
.vr { width: 1px; background: #ccc; flex: none; }
.vr-t { height: 28px; margin-left: 26px; }
.ok { width: 20px; height: 20px; margin-left: 23px; }
.valid { font-size: 16px; color: #444; margin-left: 11px; }
.save { width: 92px; height: 27px; background: #fff; color: #777; font-size: 18px; margin-left: auto; }
.run { width: 87px; height: 29px; background: #0b4dbf; color: #fff; font-size: 18px; font-weight: 500; border-radius: 2px; margin-left: 13px; }
.vr-a { height: 30px; margin-left: 11px; }
.ur { width: 26px; height: 22px; margin-left: 16px; }
.ur-r { margin-left: 17px; }
.vr-b { height: 30px; margin-left: 15px; }
.xv { width: 24px; height: 26px; margin-left: 15px; }

.panel { background: #fff; box-shadow: 1px 1px 4px rgba(0,0,0,.3); flex: none; position: relative; }
.design { height: 497px; padding-left: 36px; }
.dhead { height: 48px; width: 1558px; display: flex; align-items: center; border-bottom: 1px solid #111; padding: 0 135px 0 0; }
.dtitle { font-size: 18.200px; color: #222; margin-top: -2px; }
.dtools { margin-left: auto; display: flex; align-items: center; margin-top: 3px; }
.bulb { width: 20px; height: 24px; }
.toggle { width: 50px; height: 20px; margin-left: 13px; border: 1px solid #555; border-radius: 6px; display: flex; align-items: center; overflow: hidden; font: 500 12px Roboto, sans-serif; color: #222; background: #fff; gap: 3px; }
.toggle-k { width: 21px; height: 100%; background: #444; }
.vr-d { height: 24px; margin: 0 24px 0 18px; }
.ti { width: 24px; height: 24px; margin-right: 28px; flex: none; }
.ti-trash { margin-right: 29px; }
.vr-d + .ti + .vr-d { margin-left: -2px; }
.ti:last-child { margin-right: 0; }

.dbody { display: flex; height: 424px; }
.palette { width: 113px; height: 424px; background: #eee; border: 1px solid #c8c8c8; border-width: 0 1px 1px; position: relative; display: flex; flex-direction: column; flex: none; }
.pal-list { height: 394px; flex: none; overflow: hidden; display: flex; flex-direction: column; padding-top: 22px; }
.pal { height: 63px; flex: none; display: flex; flex-direction: column; align-items: center; font: 11.500px Lato, sans-serif; color: #555; margin-right: 10px; gap: 4px; }
.pal svg { width: 24px; height: 24px; margin-top: 2px; flex: none; }
.pal-more { height: 29px; background: #dcdcdc; display: flex; flex-direction: column; align-items: center; justify-content: center; gap: 2px; padding-right: 1px; }
.pal-more i { width: 3px; height: 3px; background: #222; border-radius: 50%; }
.pal-thumb { position: absolute; right: 1px; top: 1px; width: 9px; height: 98px; background: #8c8c8c; border-radius: 5px; }

.canvas { position: relative; width: 1446px; height: 424px; flex: none; }
.node { position: absolute; width: 167px; height: 74px; border-radius: 6px; background: #d4e8fa; border: 2px solid #e0eefb; box-shadow: inset 0 0 0 2px #f6fbff; padding: 11px 0 0 11px; font: 11.500px Lato, sans-serif; color: #444; }
.node span { display: block; line-height: 13px; }
.node svg { position: absolute; left: 18px; top: 40px; width: 18px; height: 18px; }
.node-sel { border-color: #4a9be8; }
.c1 { left: 120px; } .c2 { left: 360px; } .c3 { left: 600px; }
.r1 { top: 37px; } .r2 { top: 157px; } .r3 { top: 277px; }
.wires { position: absolute; left: 0; top: 0; width: 1446px; height: 424px; }
.canvas-thumb { position: absolute; left: 1436px; top: 100px; width: 9px; height: 292px; background: #8c8c8c; border-radius: 0 0 5px 5px; }
.mini { position: absolute; left: 1415px; top: 386px; width: 22px; height: 20px; }

.grip { height: 21px; background: #eee; display: flex; align-items: center; justify-content: center; gap: 3px; flex: none; margin: 0 -1px; }
.grip i { width: 6px; height: 6px; border-radius: 50%; background: #8f8f8f; }

.props { height: 185px; padding: 0 36px; }
.ptabs { height: 49px; width: 1559px; border-bottom: 1px solid #111; display: flex; align-items: center; font-size: 18.500px; color: #222; padding-right: 9px; }
.ptab { height: 48px; line-height: 38px; }
.ptab-on { color: #3a6fc9; border-bottom: 3px solid #2468cf; width: 89px; text-align: center; margin-right: 24px; }
.vr-p { height: 33px; margin: -8px 0 0 26px; }
.pf { width: 17px; height: 20px; margin: -2px 0 0 17px; }
.pname { margin: -12px 0 0 10px; }
.pview { margin-left: auto; display: flex; gap: 28px; margin-top: 5px; }
.pview svg { width: 24px; height: 24px; }
.pbody { display: flex; }
.pnav { width: 140px; padding: 18px 0 0 4px; font-size: 15.500px; font-weight: 500; color: #222; flex: none; }
.pnav div { height: 44px; line-height: 44px; }
.pdiv { width: 10px; height: 86px; margin-top: 25px; border-right: 1px solid #ccc; position: relative; flex: none; }
.pdiv i { position: absolute; left: 0; top: 0; width: 9px; height: 42px; background: #8c8c8c; border-radius: 5px; }
.pmain { margin-left: 12px; width: 1372px; flex: none; }
.cond { display: flex; gap: 8px; margin-top: 22px; padding-left: 2px; font-size: 15.500px; color: #555; }
.cond > span { margin-top: 2px; }
.select { width: 204px; height: 29px; border: 1px solid #888; border-radius: 2px; display: flex; align-items: center; justify-content: space-between; padding: 0 6px 0 12px; font-size: 16px; }
.select i { border: 4px solid transparent; border-top: 6px solid #222; border-bottom: 0; }
.fc { height: 57px; border-bottom: 1px solid #111; display: flex; justify-content: space-between; align-items: center; padding: 7px 5px 0 1px; font-size: 15px; color: #555; }
.fc svg { width: 18px; height: 18px; }
.props-thumb { position: absolute; left: 1586px; top: 53px; width: 9px; height: 60px; background: #8c8c8c; border-radius: 5px; }

/* user menu */
.menu { position: absolute; top: 77px; right: 7px; width: 196px; height: 251px; padding-top: 19px; background: #fff; border-radius: 14px; box-shadow: 0 3px 10px rgba(0,0,0,.25); z-index: 2; font-size: 16.500px; color: #555; }
.mi { height: 48px; line-height: 48px; padding-left: 24px; }
.mi-d { color: #333; font-size: 17.500px; }
.mi-e { font-size: 16.800px; height: 49px; line-height: 49px; }
.msep { border: 0; height: 1px; background: #ddd; margin: 9px 0; }

/* taskbar */
.taskbar { height: 68px; margin-top: 8px; background: #1c1c1c; display: flex; padding-left: 387.750px; flex: none; }
.tb { width: 60px; height: 59px; margin: 4px 3.250px 0; border-radius: 6px; display: flex; flex-direction: column; align-items: center; padding-top: 13px; flex: none; }
.tb svg { width: 36px; height: 36px; flex: none; }
.tb::after { content: ""; width: 10px; height: 5px; border-radius: 3px; background: #9a9a9a; margin-top: auto; }
.tb-nodot::after { background: transparent; }
.tb-sel { background: #2b2b2b; }
.tb-sel::after { width: 26px; height: 6px; background: #e8b9a5; }
.tb-arrow { margin-left: 1px; margin-right: 5.500px; }
.tb-sticky { margin-left: 5.750px; }
.tb-edge { margin-left: 10.750px; }
.tb-ie { margin-left: 19.750px; }
.tb-chrome { margin-left: 0.750px; }
.tb-rdp { margin-left: -9.250px; }
.tb-wide svg { width: 44px; height: 42px; margin-top: -6px; }
.tb-t { font: 700 15px "Open Sans", sans-serif; fill: #fff; }
.tb-t-w { font-size: 12px; }
.tb-e { font: 700 44px "Open Sans", sans-serif; fill: #2aa6ea; }
.tray { margin-left: auto; padding-right: 23px; display: grid; grid-template-columns: 48px 48px 66px 48px 24px 46px 116px 32px; align-items: center; justify-items: center; color: #eee; font: 17.500px "Open Sans", sans-serif; height: 68px; }
.tr { width: 16px; height: 10px; }
.tr-mic { width: 16px; height: 26px; }
.tr-w { width: 24px; height: 24px; }
.lang, .clock { display: flex; flex-direction: column; align-items: center; line-height: 24px; }
.clock { align-items: flex-end; justify-self: end; padding-right: 8px; }
```
